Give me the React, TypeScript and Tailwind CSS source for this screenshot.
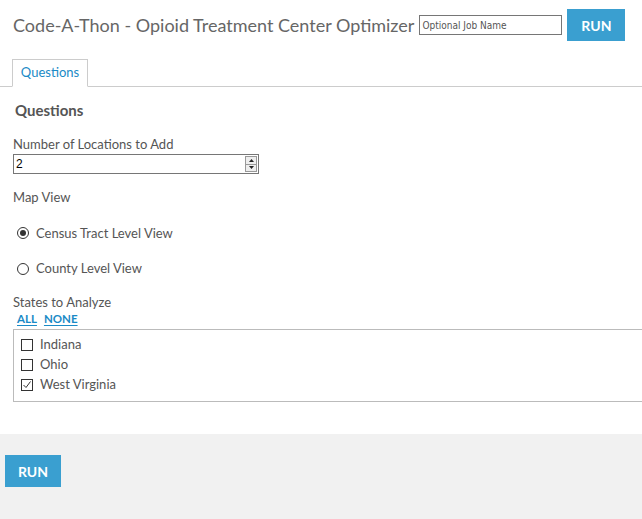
import { useState } from 'react';

const states = [
  { name: 'Indiana', checked: false },
  { name: 'Ohio', checked: false },
  { name: 'West Virginia', checked: true },
];

function Radio({ on, label }: { on: boolean; label: string }) {
  return (
    <label className="flex items-center gap-[7px] pl-[4px] text-[13px] text-[#555]">
      <span className="flex h-[12px] w-[12px] items-center justify-center rounded-full border border-[#333] bg-white">
        {on && <span className="h-[6px] w-[6px] rounded-full bg-[#333]" />}
      </span>
      {label}
    </label>
  );
}

function Check({ on, label }: { on: boolean; label: string }) {
  return (
    <div className="flex h-[20px] items-center gap-[7px] pl-[7px] text-[13px] text-[#555]">
      <span className="flex h-[12px] w-[12px] items-center justify-center border border-[#333] bg-white">
        {on && (
          <svg width="10" height="10" viewBox="0 0 10 10">
            <path d="M1.5 5 L4 7.5 L8.5 1.5" fill="none" stroke="#333" strokeWidth="1" />
          </svg>
        )}
      </span>
      {label}
    </div>
  );
}

export default function App() {
  const [jobName, setJobName] = useState('');

  return (
    <div className="flex h-[519px] w-[642px] flex-col overflow-hidden bg-white font-['Lato',sans-serif]">
      <div className="flex items-center whitespace-nowrap pl-[13px] pt-[9px]">
        <h1 className="text-[18px] leading-[32px] text-[#666]">Code-A-Thon - Opioid Treatment Center Optimizer</h1>
        <input
          type="text"
          value={jobName}
          onChange={(e) => setJobName(e.target.value)}
          placeholder="Optional Job Name"
          className="ml-[5px] h-[20px] w-[143px] border border-[#767676] px-[2px] font-['DejaVu_Sans_Condensed','DejaVu_Sans',sans-serif] text-[10px] text-[#333] placeholder-[#555] outline-none"
        />
        <button className="ml-[5px] h-[32px] w-[58px] bg-[#3a9fd0] text-[14px] font-bold text-white">RUN</button>
      </div>

      <div className="mt-[18px] flex border-b border-[#ccc] pl-[12px]">
        <div className="-mb-px flex h-[28px] w-[76px] items-center justify-center border border-b-white border-[#ccc] bg-white text-[13px] text-[#1a8ac6]">
          Questions
        </div>
      </div>

      <div className="px-[13px]">
        <h2 className="mt-[12px] pl-[2px] text-[15px] font-bold text-[#555]">Questions</h2>

        <div className="mt-[13px] text-[13px] text-[#555]">Number of Locations to Add</div>
        <div className="flex h-[20px] w-[246px] items-center border border-[#767676] bg-white">
          <span className="flex-1 pl-[2px] font-['Liberation_Sans',sans-serif] text-[12px] text-black">2</span>
          <div className="mr-[1px] flex h-[16px] w-[12px] flex-col border border-[#999] bg-[#eee]">
            <div className="flex flex-1 items-center justify-center border-b border-[#999]">
              <svg width="5" height="3" viewBox="0 0 5 3"><path d="M0 3 L2.5 0 L5 3 Z" fill="#222" /></svg>
            </div>
            <div className="flex flex-1 items-center justify-center">
              <svg width="5" height="3" viewBox="0 0 5 3"><path d="M0 0 L2.5 3 L5 0 Z" fill="#222" /></svg>
            </div>
          </div>
        </div>

        <div className="mt-[14px] text-[13px] text-[#555]">Map View</div>
        <div className="mt-[16px]">
          <Radio on label="Census Tract Level View" />
        </div>
        <div className="mt-[16px]">
          <Radio on={false} label="County Level View" />
        </div>

        <div className="mt-[14px] text-[13px] text-[#555]">States to Analyze</div>
        <div className="flex gap-[7px] pl-[4px] text-[11.5px] font-bold leading-[13px] text-[#1a8ac6]">
          <a className="underline underline-offset-2">ALL</a>
          <a className="underline underline-offset-2">NONE</a>
        </div>
        <div className="mt-[4px] -mr-[20px] h-[73px] border border-[#bbb] pt-[5px]">
          {states.map((s) => (
            <Check key={s.name} on={s.checked} label={s.name} />
          ))}
        </div>
      </div>

      <div className="mt-[32px] flex-1 bg-[#f1f1f1] pl-[5px] pt-[21px]">
        <button className="h-[32px] w-[56px] bg-[#3a9fd0] text-[14px] font-bold text-white">RUN</button>
      </div>
    </div>
  );
}
